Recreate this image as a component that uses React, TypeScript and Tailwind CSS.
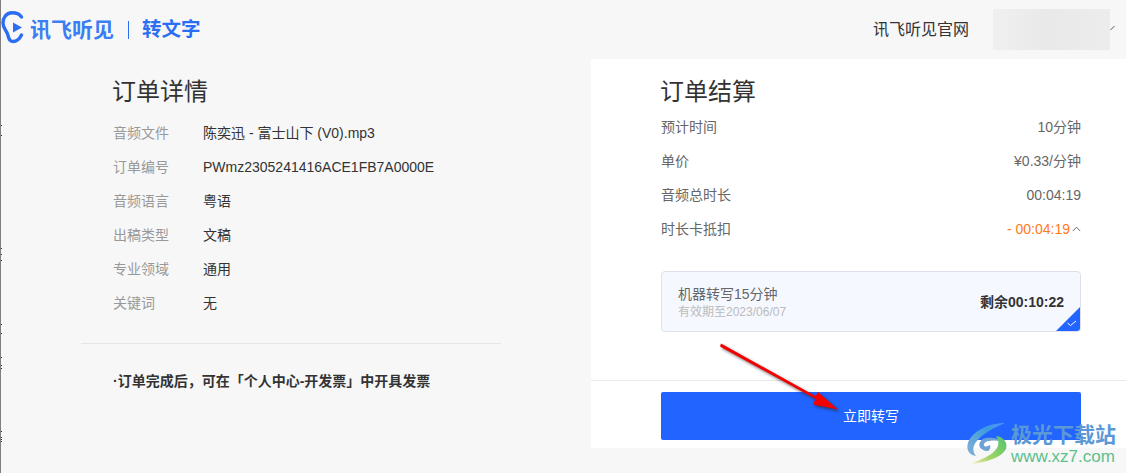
import React from "react";

const font = { fontFamily: '"Liberation Sans","Noto Sans CJK SC",sans-serif' };
const ticks = [125, 135, 248, 254, 260, 324, 333, 357, 365, 368, 431, 437, 439, 441];

function LeftRow({ label, value }: { label: string; value: string }) {
  return (
    <div className="flex h-[34px] items-center text-[14px]">
      <span className="w-[90px] text-[#999999]">{label}</span>
      <span className="text-[#333333]">{value}</span>
    </div>
  );
}

function RightRow({ label, children }: { label: string; children: React.ReactNode }) {
  return (
    <div className="flex h-[34px] items-center justify-between text-[14px] text-[#666666]">
      <span>{label}</span>
      {children}
    </div>
  );
}

export default function App() {
  return (
    <div className="relative h-[473px] w-[1126px] overflow-hidden border-l border-[#808080] bg-[#f7f7f7]" style={font}>
      <header className="flex h-[59px] items-center justify-between">
        <div className="flex items-center">
          <svg width="24" height="34" viewBox="0 0 24 34" className="mt-[-3px]" fill="none">
            <path d="M20.5 6C18.5 2.5 14.5 1.7 11 1.7C5 1.7 2 7 2 12C2 17 5 19 6.5 23C8 27 8 30.5 12 30.5C15 30.5 18.5 28 20.5 24" stroke="#2a6ff3" strokeWidth="3.4" strokeLinecap="round" />
            <path d="M12 11.5L21 16.5L12 21.5Z" fill="#2a6ff3" />
          </svg>
          <span className="ml-[5px] text-[21px] leading-none font-bold text-[#3b7df5]">讯飞听见</span>
          <span className="ml-[14px] h-[18px] w-px bg-[#2a6ff3]" />
          <span className="ml-[13px] text-[19.5px] leading-none font-bold text-[#2a6ff3]">转文字</span>
        </div>
        <div className="flex items-center">
          <span className="text-[16px] text-[#333333]">讯飞听见官网</span>
          <div className="ml-[24px] h-[41px] w-[117px] bg-[linear-gradient(90deg,#f0f0f0,#e9e9e9_45%,#ececec)]" />
          <svg width="5" height="6" viewBox="0 0 5 6" className="mr-[11px] mt-[-3px]" fill="none">
            <path d="M0.5 5L4.5 1" stroke="#555555" strokeWidth="1" />
          </svg>
        </div>
      </header>

      <main className="flex h-[389px]">
        <section className="w-[590px] pt-[15px]">
          <div className="pl-[112px]">
            <h1 className="ml-[-1px] h-[36px] text-[24px] leading-[36px] font-normal text-[#333333]">订单详情</h1>
            <div className="mt-[6px]">
              <LeftRow label="音频文件" value="陈奕迅 - 富士山下 (V0).mp3" />
              <LeftRow label="订单编号" value="PWmz2305241416ACE1FB7A0000E" />
              <LeftRow label="音频语言" value="粤语" />
              <LeftRow label="出稿类型" value="文稿" />
              <LeftRow label="专业领域" value="通用" />
              <LeftRow label="关键词" value="无" />
            </div>
          </div>
          <div className="mt-[23px] ml-[80px] w-[420px] border-t border-[#e6e6e6]" />
          <p className="mt-[27px] pl-[112px] text-[14px] leading-[20px] font-bold text-[#333333]">{"·订单完成后\uFF0C可在「个人中心-开发票」中开具发票"}</p>
        </section>

        <section className="flex flex-1 flex-col bg-white">
          <div className="h-[321px] px-[70px] pt-[15px] pr-[45px]">
            <h1 className="ml-[-1px] h-[36px] text-[24px] leading-[36px] font-normal text-[#333333]">订单结算</h1>
            <div>
              <RightRow label="预计时间"><span>10分钟</span></RightRow>
              <RightRow label="单价"><span>¥0.33/分钟</span></RightRow>
              <RightRow label="音频总时长"><span>00:04:19</span></RightRow>
              <RightRow label="时长卡抵扣">
                <span className="flex items-center text-[#ff7a1a]">
                  - 00:04:19
                  <svg width="9" height="6" viewBox="0 0 9 6" className="ml-[2px]" fill="none">
                    <path d="M0.8 5L4.5 1.2L8.2 5" stroke="#666666" strokeWidth="1" />
                  </svg>
                </span>
              </RightRow>
            </div>
            <div className="relative mt-[25px] flex h-[61px] items-center justify-between overflow-hidden rounded-[4px] border border-[#dde1e9] bg-[#f6f8ff] pr-[16px] pl-[16px]">
              <div>
                <div className="text-[14px] leading-[20px] text-[#666666]">机器转写15分钟</div>
                <div className="text-[12px] leading-[16px] text-[#bbbbbb]">有效期至2023/06/07</div>
              </div>
              <span className="mt-[2px] text-[14px] font-bold text-[#333333]">剩余00:10:22</span>
              <svg width="24" height="24" viewBox="0 0 24 24" className="absolute right-0 bottom-0">
                <path d="M24 0V24H0Z" fill="#2264ff" />
                <path d="M11.5 16L14.5 18.5L20 14" fill="none" stroke="#ffffff" strokeWidth="1" />
              </svg>
            </div>
          </div>
          <div className="border-t border-[#e8eaee] px-[70px] pt-[11px] pr-[45px]">
            <button className="flex h-[48px] w-full items-center justify-center rounded-[2px] bg-[#2264ff] text-[14px] text-white">立即转写</button>
          </div>
        </section>
      </main>

      {/* annotation arrow and the ticks along the left edge of the captured window */}
      <svg width="1126" height="473" className="pointer-events-none absolute top-0 left-[-1px]">
        <defs>
          <filter id="s" x="-20%" y="-20%" width="140%" height="140%">
            <feGaussianBlur stdDeviation="1.5" />
          </filter>
        </defs>
        {ticks.map((y) => (
          <rect key={y} x="0" y={y} width="2" height="1" fill="#333333" />
        ))}
        <path d="M720 346.5L815.5 399L813 404.5L838 409.5L818 392L815.5 396L721 343.5Z" fill="#222222" opacity="0.65" filter="url(#s)" transform="translate(2 2)" />
        <path d="M720 346.5L815.5 399L813 404.5L838 409.5L818 392L815.5 396L721 343.5Z" fill="#f50000" />
      </svg>

      {/* watermark */}
      <div className="pointer-events-none absolute top-[423px] left-[965px] flex">
        <svg width="44" height="42" viewBox="0 0 44 42" fill="none">
          <defs>
            <linearGradient id="b" x1="38" y1="0" x2="2" y2="30" gradientUnits="userSpaceOnUse">
              <stop offset="0" stopColor="#6fb2ee" stopOpacity="0.55" />
              <stop offset="0.35" stopColor="#3a9be0" />
              <stop offset="1" stopColor="#7fb0d6" />
            </linearGradient>
            <linearGradient id="g" x1="38" y1="14" x2="6" y2="40" gradientUnits="userSpaceOnUse">
              <stop offset="0" stopColor="#58c46f" />
              <stop offset="0.6" stopColor="#a4d566" />
              <stop offset="1" stopColor="#f3ecb4" />
            </linearGradient>
          </defs>
          <path d="M39 0C22 0 4 9 1.5 22C0.5 28 4 32 10 33C6 28 7 23 10 19C15 12 27 5 39 0Z" fill="url(#b)" />
          <path d="M21 28C11 27 11 17 20 15C26 14 32 15 35 18C29 17 19 17 18 21C17 24 21 24 24 22C25 26 23 28 21 28Z" fill="#6fa3d4" />
          <path d="M30 13C38 14 42 20 40 26C36 34 22 39 5 41C15 36 26 33 31 25C33 21 33 17 30 13Z" fill="url(#g)" />
        </svg>
        <div className="ml-[1px] flex flex-col">
          <span className="text-[21px] leading-[24px] font-bold whitespace-nowrap text-[#5b98d6]">极光下载站</span>
          <span className="text-[17px] leading-[20px] font-normal whitespace-nowrap text-[#5cc08c]">www.xz7.com</span>
        </div>
      </div>
    </div>
  );
}
